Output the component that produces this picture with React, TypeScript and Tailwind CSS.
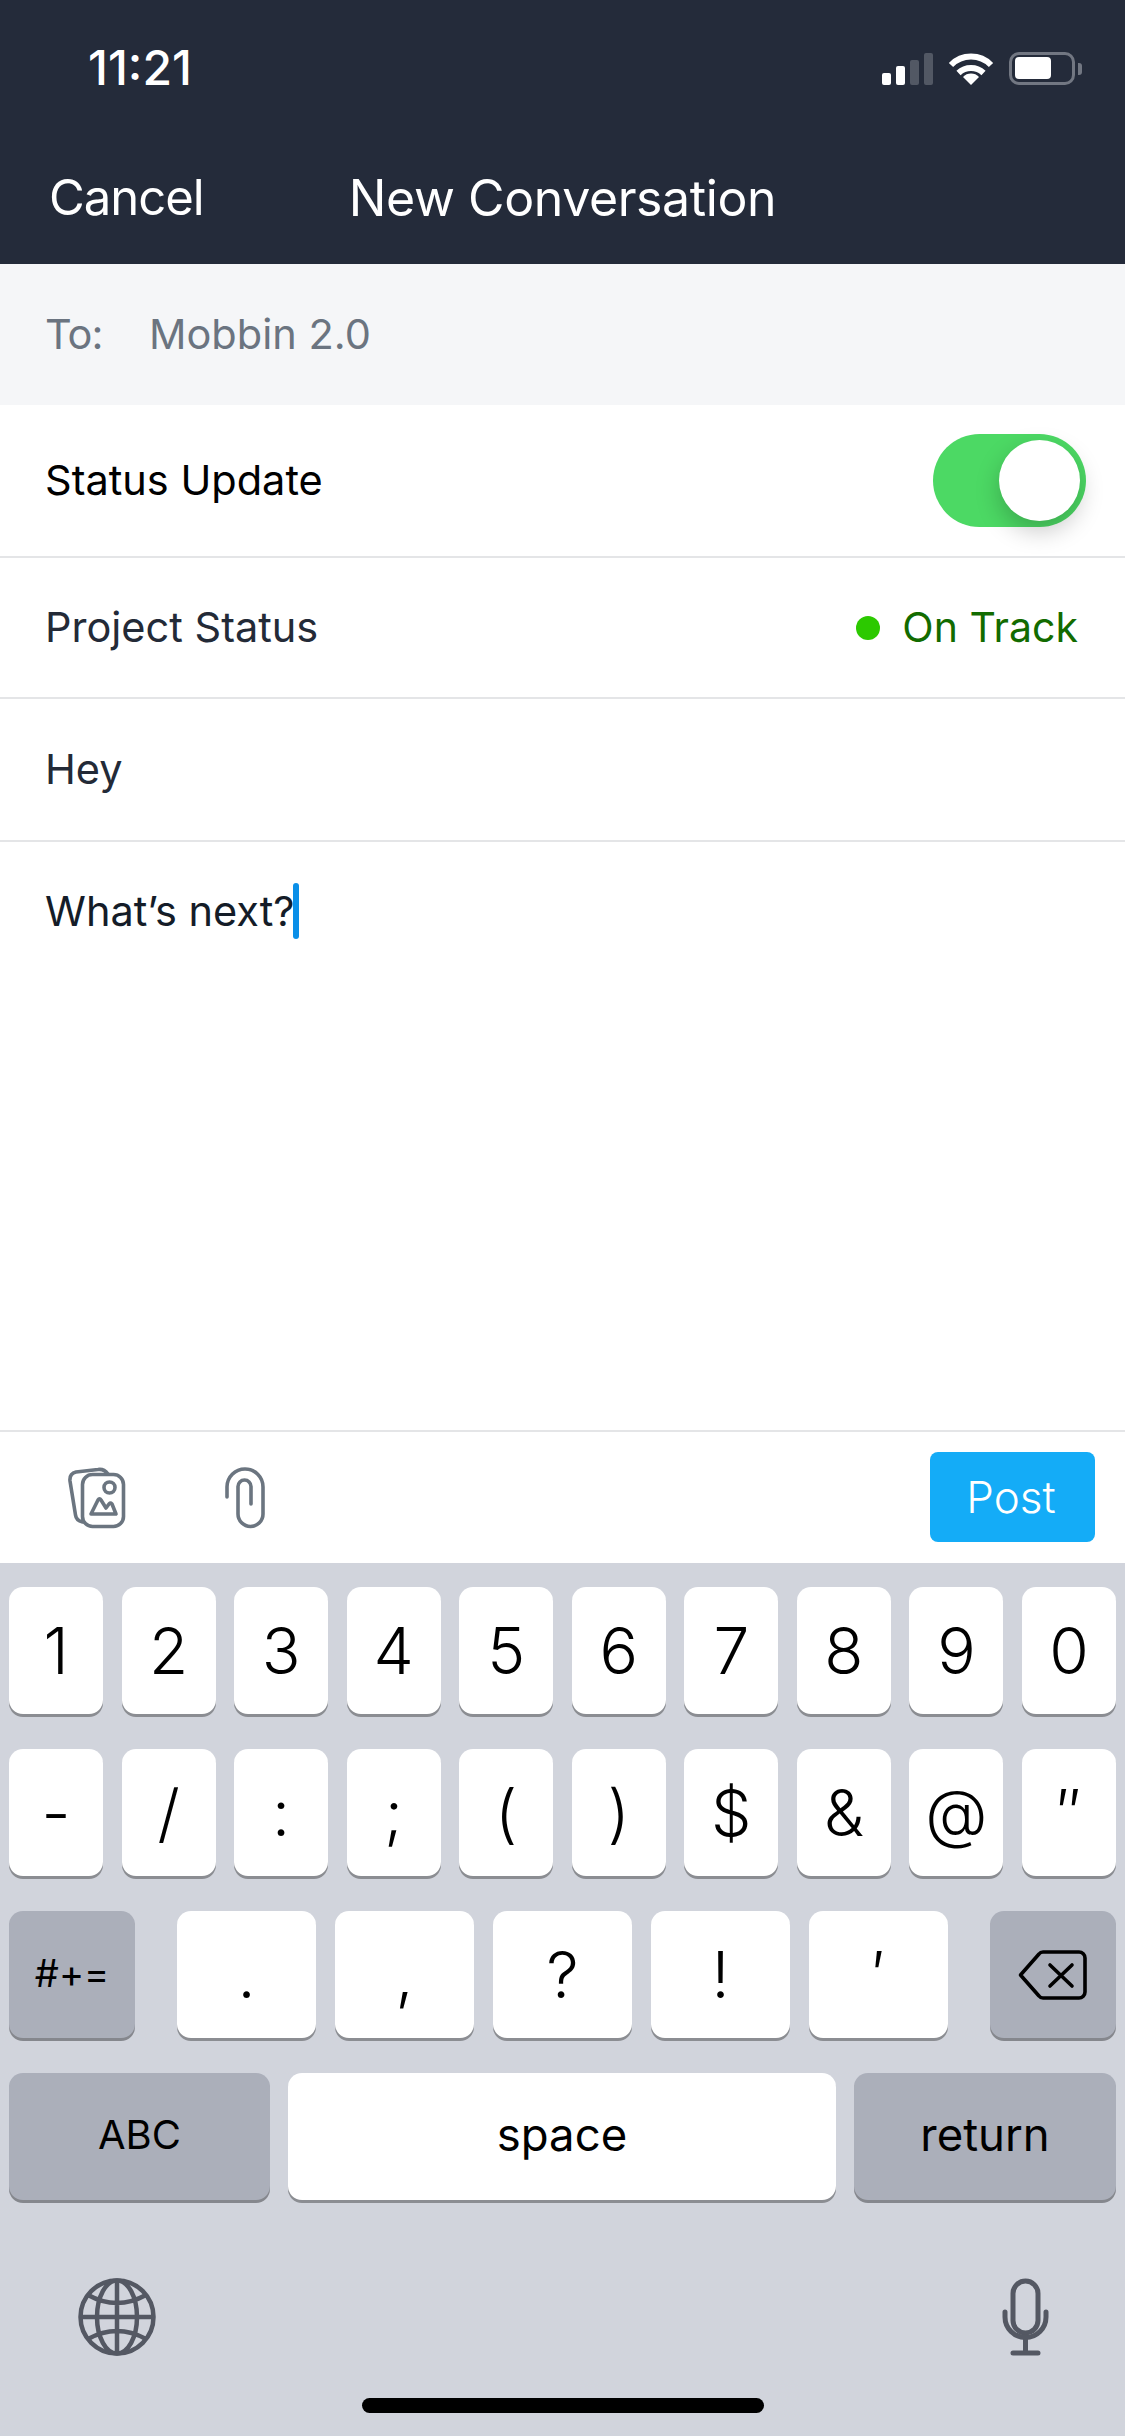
import React from "react";

const row1 = ["1", "2", "3", "4", "5", "6", "7", "8", "9", "0"];
const row2 = ["-", "/", ":", ";", "(", ")", "$", "&", "@", "″"];
const row3 = [".", ",", "?", "!", "′"];

function Key({ label, className = "" }: { label: React.ReactNode; className?: string }) {
  return (
    <div className={`flex h-[127px] items-center justify-center rounded-[14px] bg-white text-[64px] font-light text-black shadow-[0_3px_0_#8b8d92] ${className}`}>
      {label}
    </div>
  );
}

function DarkKey({ label, className = "" }: { label: React.ReactNode; className?: string }) {
  return (
    <div className={`flex h-[127px] items-center justify-center rounded-[14px] bg-[#abafba] text-black shadow-[0_3px_0_#85878d] ${className}`}>
      {label}
    </div>
  );
}

function Row({ children, className = "" }: { children: React.ReactNode; className?: string }) {
  return <div className={`flex items-center border-b-2 border-[#e4e5e7] pl-[45px] ${className}`}>{children}</div>;
}

export default function App() {
  return (
    <div className="flex h-[2436px] w-[1125px] flex-col overflow-hidden bg-white font-['Inter',sans-serif]">
      <header className="h-[264px] shrink-0 bg-[#242b3a] text-white">
        <div className="flex h-[136px] items-center justify-between pl-[88px] pr-[43px]">
          <span className="text-[48px] font-medium">11:21</span>
          <div className="flex items-end">
            <div className="flex h-[33px] items-end gap-[5px]">
              <div className="h-[12px] w-[9px] rounded-[2px] bg-white" />
              <div className="h-[19px] w-[9px] rounded-[2px] bg-white" />
              <div className="h-[25px] w-[9px] rounded-[2px] bg-[#525864]" />
              <div className="h-[32px] w-[9px] rounded-[2px] bg-[#525864]" />
            </div>
            <svg className="ml-[15px]" width="46" height="33" viewBox="0 0 46 33">
              <path d="M3 13 A28 28 0 0 1 43 13" fill="none" stroke="#fff" strokeWidth="6" />
              <path d="M10.5 21 A18 18 0 0 1 35.5 21" fill="none" stroke="#fff" strokeWidth="6" />
              <path d="M23 33 L15 25 A11 11 0 0 1 31 25 Z" fill="#fff" />
            </svg>
            <div className="ml-[15px] flex h-[33px] w-[66px] items-center rounded-[10px] border-[3px] border-[#727782] pl-[3px]">
              <div className="h-[22px] w-[36px] rounded-[4px] bg-white" />
            </div>
            <div className="mb-[10px] ml-[3px] h-[12px] w-[4px] rounded-r-[3px] bg-[#727782]" />
          </div>
        </div>
        <div className="grid h-[124px] grid-cols-[1fr_auto_1fr] items-center">
          <span className="pl-[49px] text-[49px] tracking-[-1px]">Cancel</span>
          <span className="text-[50px] tracking-[-0.4px]">New Conversation</span>
          <span />
        </div>
      </header>

      <div className="flex h-[141px] shrink-0 items-center bg-[#f5f6f8] pl-[45px] text-[41.5px] text-[#6b7480]">
        <span className="w-[104px] tracking-[-1px]">To:</span>
        <span>Mobbin 2.0</span>
      </div>

      <Row className="h-[153px] shrink-0 justify-between pr-[39px] text-[41.5px] text-black">
        <span>Status Update</span>
        <div className="flex h-[93px] w-[153px] items-center justify-end rounded-full bg-[#4cd964] pr-[6px]">
          <div className="h-[81px] w-[81px] rounded-full bg-white shadow-[0_10px_24px_rgba(0,0,0,0.22)]" />
        </div>
      </Row>

      <Row className="h-[141px] shrink-0 justify-between pr-[47px] text-[41.5px] text-[#232a37]">
        <span>Project Status</span>
        <div className="flex items-center gap-[22px] text-[41px] text-[#126b00]">
          <div className="h-[24px] w-[24px] rounded-full bg-[#2cc900]" />
          <span>On Track</span>
        </div>
      </Row>

      <Row className="h-[143px] shrink-0 text-[41.5px] text-[#232a37]">Hey</Row>

      <div className="min-h-0 flex-1 border-b-2 border-[#e4e5e7] pl-[45px] pt-[41px]">
        <div className="flex h-[56px] items-center text-[41.5px] text-[#141c28]">
          <span>What’s next?</span>
          <div className="-ml-[2px] h-[56px] w-[6px] rounded-[3px] bg-[#0a8fe8]" />
        </div>
      </div>

      <div className="flex h-[131px] shrink-0 items-center pl-[68px] pr-[30px]">
        <svg width="58" height="62" viewBox="0 0 58 62" fill="none" stroke="#6b7580" strokeWidth="3.6" strokeLinecap="round" strokeLinejoin="round">
          <rect x="14.5" y="7.5" width="41" height="52" rx="10" />
          <circle cx="41.5" cy="20.5" r="5.5" />
          <path d="M23 47 L30 33 Q31.5 30.5 33 33 L38 41 L41 37 Q42.5 35.5 44 37 L48 47 Z" />
          <path d="M14.5 55 C10 54 8 52 7.5 48 L2 14 C1.5 9 3.5 6 8 5 L30 2.5 C33 2 37 3 40 7" />
        </svg>
        <svg className="ml-[97px]" width="44" height="66" viewBox="0 0 44 66" fill="none" stroke="#6b7580" strokeWidth="3.6" strokeLinecap="round">
          <path d="M4 32 V22 A18 18 0 0 1 40 22 V49 A12.5 12.5 0 0 1 15 49 V21.5 A6.5 6.5 0 0 1 28 21.5 V39" />
        </svg>
        <button className="ml-auto mb-[2px] h-[90px] w-[165px] rounded-[8px] bg-[#14acf7] pr-[3px] text-[44px] font-light text-white">Post</button>
      </div>

      <div className="flex h-[873px] shrink-0 flex-col bg-[#d1d4dc] px-[9px] pt-[24px]">
        <div className="flex gap-[18.5px]">
          {row1.map((k) => (
            <Key key={k} label={k} className="flex-1" />
          ))}
        </div>
        <div className="mt-[35px] flex gap-[18.5px]">
          {row2.map((k) => (
            <Key key={k} label={k} className="flex-1" />
          ))}
        </div>
        <div className="mt-[35px] flex">
          <DarkKey label={<span className="-mt-[2px] text-[38px]">#+=</span>} className="w-[126px]" />
          <div className="mx-[42px] flex flex-1 gap-[18.75px]">
            {row3.map((k) => (
              <Key key={k} label={k} className="flex-1" />
            ))}
          </div>
          <DarkKey
            className="w-[126px]"
            label={
              <svg width="72" height="52" viewBox="0 0 72 52" fill="none" stroke="#000" strokeWidth="3.6" strokeLinecap="round" strokeLinejoin="round">
                <path d="M26 3 H62 A6 6 0 0 1 68 9 V43 A6 6 0 0 1 62 49 H26 A5 5 0 0 1 22 47 L3.5 26 L22 5 A5 5 0 0 1 26 3 Z" />
                <path d="M33 16 L55 37 M55 16 L33 37" />
              </svg>
            }
          />
        </div>
        <div className="mt-[35px] flex gap-[18px]">
          <DarkKey label={<span className="-mt-[3px] text-[40px]">ABC</span>} className="w-[261px]" />
          <Key label={<span className="-mt-[3px] text-[45.5px] font-normal">space</span>} className="flex-1" />
          <DarkKey label={<span className="-mt-[3px] text-[45.5px]">return</span>} className="w-[262px]" />
        </div>
        <div className="mt-[77px] flex items-center justify-between pl-[68px] pr-[66px]">
          <svg width="80" height="80" viewBox="0 0 80 80" fill="none" stroke="#545863" strokeWidth="4.5">
            <circle cx="40" cy="40" r="36.5" />
            <ellipse cx="40" cy="40" rx="20" ry="36.5" />
            <path d="M40 3 V77 M3 40 H77 M11 18 Q40 34 69 18 M11 62 Q40 46 69 62" />
          </svg>
          <svg width="49" height="78" viewBox="0 0 49 78" fill="none" stroke="#545863" strokeWidth="5" strokeLinecap="round">
            <rect x="12" y="3" width="25" height="52" rx="12.5" />
            <path d="M4 34 V39 A20.5 20.5 0 0 0 45 39 V34 M24.5 60 V75 M12 75 H37" />
          </svg>
        </div>
        <div className="mt-[41px] flex justify-center">
          <div className="h-[15px] w-[402px] rounded-full bg-black" />
        </div>
      </div>
    </div>
  );
}
